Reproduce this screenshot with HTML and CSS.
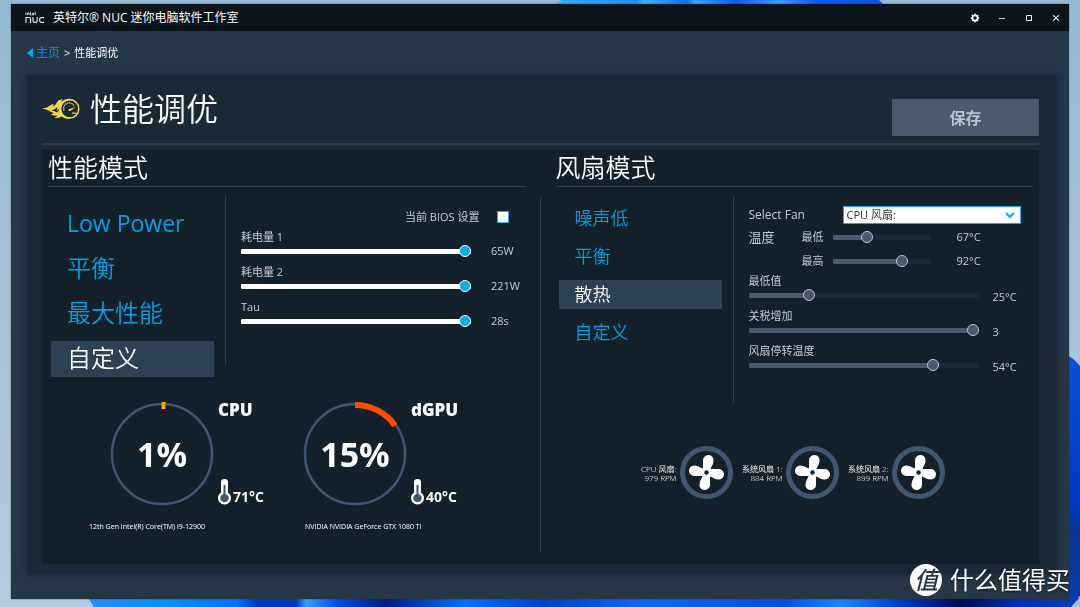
FILE: index.html
```html
<!DOCTYPE html>
<html lang="zh-CN">
<head>
<meta charset="utf-8">
<title>英特尔® NUC 迷你电脑软件工作室</title>
<link rel="stylesheet" href="styles.css">
</head>
<body>
<svg class="wallpaper" viewBox="0 0 1080 607" preserveAspectRatio="none" aria-hidden="true">
  <defs>
    <linearGradient id="sky" x1="0" y1="0" x2="0" y2="1"><stop offset="0" stop-color="#94b9d2"/><stop offset="1" stop-color="#b5c9e0"/></linearGradient>
    <linearGradient id="crest" x1="0" y1="0" x2="1" y2="0">
      <stop offset="0" stop-color="#35aefc"/><stop offset=".25" stop-color="#1f8ff8"/><stop offset=".27" stop-color="#3cb4ff"/><stop offset=".4" stop-color="#1270f4"/><stop offset=".43" stop-color="#35a6ff"/><stop offset=".55" stop-color="#0a5cf0"/><stop offset=".68" stop-color="#3a9cff"/><stop offset=".8" stop-color="#0a58f0"/><stop offset="1" stop-color="#1050dc"/>
    </linearGradient>
    <linearGradient id="petals" x1="0" y1="0" x2="1" y2="0">
      <stop offset="0" stop-color="#2a8cf5"/><stop offset=".08" stop-color="#0090ff"/><stop offset=".15" stop-color="#0070ff"/><stop offset=".17" stop-color="#0038c0"/><stop offset=".21" stop-color="#0038c0"/><stop offset=".22" stop-color="#3a9cff"/><stop offset=".25" stop-color="#0050e8"/><stop offset=".3" stop-color="#021a80"/><stop offset=".38" stop-color="#0070ff"/><stop offset=".46" stop-color="#0040c8"/><stop offset=".56" stop-color="#1068f0"/><stop offset=".7" stop-color="#0050e0"/><stop offset=".76" stop-color="#1a86ff"/><stop offset=".82" stop-color="#0038c8"/><stop offset=".88" stop-color="#020a50"/><stop offset=".94" stop-color="#0030b8"/><stop offset="1" stop-color="#0a3cae"/>
    </linearGradient>
    <linearGradient id="side" x1="0" y1="0" x2="0" y2="1"><stop offset="0" stop-color="#0a50d8"/><stop offset=".6" stop-color="#0038c0"/><stop offset=".7" stop-color="#0a3490"/><stop offset="1" stop-color="#0a3cae"/></linearGradient>
  </defs>
  <path fill="url(#sky)" d="M0 0h1080v607H0z"/>
  <path fill="url(#crest)" d="M562 0h317l6 6H554z"/>
  <path fill="url(#petals)" d="M88 598h992v9H94z"/>
  <path fill="url(#side)" d="M1060 352q12 4 20 14v230l-12 11h-8z"/>
  <path fill="#a9bdd8" d="M1080 597v10h-9z"/>
</svg>

<div class="window">
  <header class="titlebar">
    <svg class="nuc" viewBox="0 0 20 13" aria-hidden="true">
      <g fill="none" stroke="#dfe5ea" stroke-width="1.2">
        <path d="M1 12V6.5h3q1.6 0 1.6 1.6V12M8 6v3.8q0 1.6 1.6 1.6h1q1.6 0 1.6-1.6V6M19 6.6h-2.6q-1.8 0-1.8 1.8v1.2q0 1.8 1.8 1.8H19"/>
        <path stroke-width=".9" d="M1 1.700V4M2.500 4V2h1.600v2M5.600 1v3h1M8.900 3.900H7.500V2.200h1.400v1H7.600M10.300.8V4"/>
      </g>
    </svg>
    <span class="app-name">英特尔® NUC 迷你电脑软件工作室</span>
    <button class="win-btn" aria-label="设置"><svg viewBox="0 0 10 10"><g fill="none" stroke="#fff"><circle cx="5" cy="5" r="2.600" stroke-width="1.800"/><path stroke-width="1.700" d="M5 .8v1.400M5 7.800v1.400M.8 5h1.400M7.800 5h1.400M2 2l1 1M7 7l1 1M8 2L7 3M3 7L2 8"/></g></svg></button>
    <button class="win-btn" aria-label="最小化"><svg viewBox="0 0 10 10"><path stroke="#ccd2d8" d="M2 5.5h6"/></svg></button>
    <button class="win-btn" aria-label="最大化"><svg viewBox="0 0 10 10"><path fill="none" stroke="#fff" d="M2.500 2.500h5v5h-5z"/></svg></button>
    <button class="win-btn" aria-label="关闭"><svg viewBox="0 0 10 10"><path stroke="#fff" stroke-width="1.1" d="M2.300 2.300l5.400 5.400M7.700 2.300L2.300 7.700"/></svg></button>
  </header>

  <nav class="crumbs">
    <a href="#home"><svg viewBox="0 0 6 10" aria-hidden="true"><path fill="#00aeef" d="M6 0v10L0 5z"/></svg>主页</a>
    <span>&gt;</span>
    <span>性能调优</span>
  </nav>

  <main class="panel">
    <div class="panel-head">
      <svg class="flame" viewBox="0 0 38 22" aria-hidden="true">
        <path fill="#f2d54a" d="M0 10.500q5-.2 7.500-2.500Q9.500 6.300 12 5.800q-.8 1.300-1.300 2.700 2.800-.8 3.800-3.500Q16 1.600 21 1q-1.500 1-1.500 2.400Q23 .6 28 .8v1.600q-8.500.6-8.700 8.400.2 8 8.700 8.800v1.400q-5.500 0-8.300-2.500-3 2-7.200 1.300 2.500-.8 2.700-2.300-3.700.6-6.700-1.300 2.400 0 3.200-1.200-2.500-.4-3.700-1.700Q5 11.500 0 10.500z"/>
        <path fill="#1a2936" d="M9.500 12.400q3.700-.4 5.700-3.400.8 1.600-.9 3.400 1.700-.2 3-2-.1 3-2.700 4.100-1-1.600-5.100-2.100z"/>
        <circle cx="27.500" cy="10.800" r="9.300" fill="none" stroke="#f2d54a" stroke-width="1.500"/>
        <path fill="none" stroke="#f2d54a" stroke-width="1.300" stroke-dasharray="1.500 .6" d="M22 12.500a5.600 5.600 0 0 1 10.500-4"/>
        <path fill="#f2d54a" d="M33.500 9.300l-5 3.500q-1.600.6-2-.5-.2-1.200 1.500-1.500zM30 14.500h4v1.200h-4z"/>
      </svg>
      <h1>性能调优</h1>
      <button class="save">保存</button>
    </div>

    <div class="board">
      <section class="side">
        <h2>性能模式</h2>
        <div class="config perf">
          <div class="modes large">
            <button class="latin">Low Power</button>
            <button>平衡</button>
            <button>最大性能</button>
            <button class="active">自定义</button>
          </div>
          <div class="controls">
            <label class="bios">当前 BIOS 设置 <input type="checkbox"></label>
            <div class="field"><label for="pl1">耗电量 1</label><input id="pl1" type="range" min="0" max="65" value="65" style="--fill:100%"><output for="pl1">65W</output></div>
            <div class="field"><label for="pl2">耗电量 2</label><input id="pl2" type="range" min="0" max="221" value="221" style="--fill:100%"><output for="pl2">221W</output></div>
            <div class="field"><label for="tau">Tau</label><input id="tau" type="range" min="0" max="28" value="28" style="--fill:100%"><output for="tau">28s</output></div>
          </div>
        </div>
        <div class="gauges">
          <div class="gauge">
            <div class="dial"><svg viewBox="0 0 102 102" aria-hidden="true"><circle cx="51" cy="51" r="50" fill="none" stroke="#41566f" stroke-width="2.500"/><path stroke="#ff9f0a" stroke-width="4" d="M52.500 -1v7"/></svg><strong>1%</strong></div>
            <div class="facts"><b>CPU</b><span class="temp"><svg viewBox="0 0 13 26" aria-hidden="true"><path fill="#fff" d="M3 3a3.500 3 0 0 1 7 0v10.500a6.500 6.500 0 1 1-7 0z"/><path fill="#41566f" d="M5.500 6h2v9a4.200 4.200 0 1 1-2 0z"/></svg>71°C</span></div>
            <p>12th Gen Intel(R) Core(TM) i9-12900</p>
          </div>
          <div class="gauge second">
            <div class="dial"><svg viewBox="0 0 102 102" aria-hidden="true"><circle cx="51" cy="51" r="50" fill="none" stroke="#41566f" stroke-width="2.500"/><path fill="none" stroke="#ff4b00" stroke-width="6" d="M51 2a49 49 0 0 1 40 20.500"/></svg><strong>15%</strong></div>
            <div class="facts"><b>dGPU</b><span class="temp"><svg viewBox="0 0 13 26" aria-hidden="true"><path fill="#fff" d="M3 3a3.500 3 0 0 1 7 0v10.500a6.500 6.500 0 1 1-7 0z"/><path fill="#41566f" d="M5.500 6h2v9a4.200 4.200 0 1 1-2 0z"/></svg>40°C</span></div>
            <p>NVIDIA NVIDIA GeForce GTX 1080 Ti</p>
          </div>
        </div>
      </section>

      <section class="side">
        <h2>风扇模式</h2>
        <div class="config fan">
          <div class="modes">
            <button>噪声低</button>
            <button>平衡</button>
            <button class="active">散热</button>
            <button>自定义</button>
          </div>
          <div class="controls muted">
            <div class="pick"><label for="fan">Select Fan</label>
              <div class="select-box"><select id="fan"><option>CPU 风扇:</option><option>系统风扇 1:</option><option>系统风扇 2:</option></select><svg viewBox="0 0 10 7" aria-hidden="true"><path fill="none" stroke="#00aeef" stroke-width="2" d="M1 1l4 4 4-4"/></svg></div>
            </div>
            <div class="temps">
              <span>温度</span><label for="tmin">最低</label><input id="tmin" type="range" min="47" max="108" value="67" style="--fill:33%"><output for="tmin">67°C</output>
              <label class="hi" for="tmax">最高</label><input id="tmax" type="range" min="47" max="108" value="92" style="--fill:74%"><output for="tmax">92°C</output>
            </div>
            <div class="field"><label for="duty">最低值</label><input id="duty" type="range" min="0" max="100" value="25" style="--fill:25%"><output for="duty">25°C</output></div>
            <div class="field"><label for="step">关税增加</label><input id="step" type="range" min="0" max="3" value="3" style="--fill:98%"><output for="step">3</output></div>
            <div class="field"><label for="off">风扇停转温度</label><input id="off" type="range" min="0" max="66" value="54" style="--fill:82%"><output for="off">54°C</output></div>
          </div>
        </div>
        <svg class="defs" aria-hidden="true"><symbol id="rotor" viewBox="0 0 53 53"><circle cx="26.500" cy="26.500" r="24" fill="none" stroke="#41566f" stroke-width="5"/><g fill="#fff"><path id="blade" d="M23 26V14.500a5.300 5.300 0 0 1 10.600-.5q.2 3.500-2.600 7.500l-1.500 4.500z"/><use href="#blade" transform="rotate(90 26.500 26.500)"/><use href="#blade" transform="rotate(180 26.500 26.500)"/><use href="#blade" transform="rotate(270 26.500 26.500)"/><circle cx="26.500" cy="26.500" r="4"/></g><circle cx="26.500" cy="26.500" r="2.200" fill="#14212b"/></symbol></svg>
        <ul class="fans">
          <li><span>CPU 风扇:<br>979 RPM</span><svg><use href="#rotor"/></svg></li>
          <li><span>系统风扇 1:<br>884 RPM</span><svg><use href="#rotor"/></svg></li>
          <li><span>系统风扇 2:<br>899 RPM</span><svg><use href="#rotor"/></svg></li>
        </ul>
      </section>
    </div>
  </main>
</div>
<div class="watermark"><i>值</i><span>什么值得买</span></div>
</body>
</html>
```
FILE: styles.css
```css
* { box-sizing: border-box; }
body {
  margin: 0;
  min-height: 100vh;
  padding: 4px 11px 8px;
  display: flex;
  font-family: "Open Sans", "Noto Sans CJK SC", sans-serif;
  font-size: 11px;
  color: #fff;
  background: #a9c3d8;
}
button, input, select { font: inherit; margin: 0; }
button { border: 0; padding: 0; background: none; color: inherit; text-align: left; }
h1, h2, p, ul { margin: 0; padding: 0; font-weight: 350; }
svg { display: block; }
.wallpaper { position: fixed; inset: 0; width: 100%; height: 100%; z-index: -1; }
.window { flex: 1; display: flex; flex-direction: column; background: #253647; box-shadow: 0 0 1px #1a2733; }

.titlebar { display: flex; align-items: center; height: 27px; padding: 0 0 0 14px; background: #0c141c; }
.nuc { width: 20px; height: 13px; margin-right: 8px; }
.app-name { flex: 1; font-size: 12px; line-height: 16px; }
.win-btn { width: 27px; height: 27px; padding-left: 1px; display: grid; place-items: center; }
.win-btn svg { width: 10px; height: 10px; }

.crumbs { display: flex; align-items: center; gap: 4px; height: 44px; padding: 0 16px; line-height: 16px; }
.crumbs a { display: flex; align-items: center; gap: 3px; color: #0c93cb; text-decoration: none; font-size: 12px; }
.crumbs a svg { width: 6px; height: 10px; }

.panel { flex: 1; display: flex; flex-direction: column; margin: 0 14px 27px 16px; padding: 0 16px 8px 15px; background: #1a2936; box-shadow: 1px 1px 5px 1px #17263a; }
.panel-head { display: flex; align-items: center; height: 70px; margin-bottom: 5px; border-bottom: 2px solid #2b3b47; }
.flame { width: 38px; height: 22px; margin-right: 10px; }
h1 { flex: 1; font-size: 32px; line-height: 40px; }
.save { width: 147px; height: 37px; margin-top: 16px; background: #485a6b; color: #b5c3cf; font-size: 16px; font-weight: 700; text-align: center; }

.board { flex: 1; display: grid; grid-template-columns: 1fr 1fr; background: #14212b; }
.side { position: relative; padding: 0 6px 0 15px; }
.side:first-child { padding: 0 15px 0 6px; }
.side:first-child::after { content: ""; position: absolute; right: 0; top: 47px; bottom: 12px; width: 1px; background: #34404a; }
h2 { height: 37px; font-size: 25px; line-height: 34px; border-bottom: 1px solid #34404a; }
.config { display: grid; grid-template-columns: 163px 1fr; column-gap: 11px; margin: 9px 0 0 3px; }
.perf { height: 168px; }
.fan { height: 207px; }
.modes { display: grid; align-content: start; gap: 9px; padding-top: 8px; }
.modes button { height: 29px; padding: 0 0 2px 16px; font-size: 18px; font-weight: 350; line-height: 24px; color: #00a1e4; }
.modes.large { padding-top: 10px; }
.modes.large button { height: 36px; font-size: 24px; line-height: 32px; }
.modes.large .latin { font-weight: 400; font-size: 23px; }
.modes .active, .modes.large .active { background: #2d4054; color: #fff; }
.controls { border-left: 1px solid #34404a; padding-left: 15px; color: #c3c9ce; }
.perf .controls { height: 168px; }

.bios { display: flex; justify-content: flex-end; align-items: center; gap: 17px; height: 16px; margin: 13px 17px 5px 0; line-height: 16px; }
input[type="checkbox"] { appearance: none; width: 12px; height: 12px; background: #fff; border: 1px solid #2fa6dc; }
.field { display: grid; grid-template-columns: 230px 1fr; column-gap: 20px; height: 28px; margin-bottom: 7px; line-height: 14px; }
.field label { grid-column: 1 / 3; }
.muted .field { column-gap: 14px; }
.muted output { padding-top: 2px; }
.muted .temps output { padding: 0; }

input[type="range"] { appearance: none; width: 100%; height: 14px; background: none; }
input[type="range"]::-webkit-slider-runnable-track { height: 5px; border-radius: 1px; background: linear-gradient(90deg, #fff var(--fill), #1b2a38 var(--fill)); }
input[type="range"]::-webkit-slider-thumb { appearance: none; width: 12px; height: 12px; margin-top: -4px; border-radius: 50%; border: 1px solid #fff; background: #00aeef; }
.muted input[type="range"]::-webkit-slider-runnable-track { background: linear-gradient(90deg, #485a6b var(--fill), #1b2a38 var(--fill)); }
.muted input[type="range"]::-webkit-slider-thumb { border-color: #b5c3cf; background: #485a6b; }

.pick { display: grid; grid-template-columns: 94px 178px; align-items: center; height: 18px; margin-top: 10px; }
.pick label { font-size: 12px; line-height: 16px; }
.select-box { position: relative; }
select { display: block; appearance: none; width: 100%; height: 18px; padding: 0 3px; border: 1px solid #1fa5dd; border-radius: 0; background: #fff; color: #333; line-height: 14px; }
.select-box svg { position: absolute; right: 6px; top: 6px; width: 10px; height: 7px; pointer-events: none; }
.temps { display: grid; grid-template-columns: 53px 31px 98px 1fr; grid-auto-rows: 24px; align-items: center; margin: 1px 0 1px; line-height: 14px; }
.temps span { font-size: 13px; }
.temps .hi { grid-column: 2; }
.temps output { margin-left: 26px; }

.gauges { display: grid; grid-template-columns: 193px 193px; margin: 39px 0 0 41px; }
.gauge { display: grid; grid-template-columns: 102px auto; column-gap: 5px; padding-left: 22px; }
.dial { display: grid; place-items: center; height: 102px; }
.dial > * { grid-area: 1 / 1; }
.dial svg { width: 102px; height: 102px; overflow: visible; }
.dial strong { font-size: 34px; line-height: 40px; }
.facts { display: flex; flex-direction: column; justify-content: space-between; font-weight: 700; }
.facts b { font-size: 17px; line-height: 14px; }
.temp { display: flex; align-items: flex-end; gap: 2px; font-size: 14px; line-height: 16px; }
.temp svg { width: 13px; height: 26px; }
.gauge p { grid-column: 1 / 3; margin: 17px 0 0 -22px; font-size: 7px; font-weight: 400; line-height: 10px; white-space: nowrap; }
.gauge.second p { margin-left: 1px; }

.defs { position: absolute; width: 0; height: 0; }
.fans { display: flex; gap: 8px; margin: 43px 0 0 79px; list-style: none; }
.fans li { display: flex; align-items: center; gap: 3px; }
.fans span { width: 42px; text-align: right; font-size: 8px; line-height: 9px; white-space: nowrap; }
.fans svg { width: 53px; height: 53px; }

.watermark { position: fixed; right: 10px; bottom: 11px; display: flex; align-items: center; gap: 8px; font-size: 24px; line-height: 32px; text-shadow: 0 1px 2px #0008; }
.watermark i { width: 32px; height: 32px; border-radius: 50%; background: #fff; color: #253647; text-align: center; text-shadow: none; font-weight: 500; }
```
